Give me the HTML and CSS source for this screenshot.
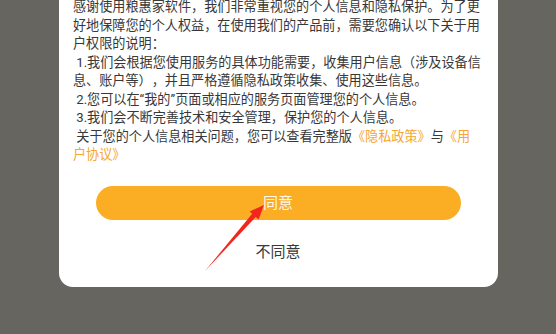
FILE: index.html
```html
<!DOCTYPE html>
<html lang="zh-CN">
<head>
<meta charset="utf-8">
<title>用户协议</title>
<link rel="stylesheet" href="styles.css">
</head>
<body>
<div class="overlay">
  <div class="dialog">
    <p class="policy">感谢使用粮惠家软件，我们非常重视您的个人信息和隐私保护。为了更<br>好地保障您的个人权益，在使用我们的产品前，需要您确认以下关于用<br>户权限的说明：<br>&nbsp;1.我们会根据您使用服务的具体功能需要，收集用户信息（涉及设备信<br>息、账户等），并且严格遵循隐私政策收集、使用这些信息。<br>&nbsp;2.您可以在“我的”页面或相应的服务页面管理您的个人信息。<br>&nbsp;3.我们会不断完善技术和安全管理，保护您的个人信息。<br>&nbsp;关于您的个人信息相关问题，您可以查看完整版<span class="link">《隐私政策》</span>与<span class="link">《用<br>户协议》</span></p>
    <div class="btn-agree">同意</div>
    <div class="btn-refuse">不同意</div>
  </div>
</div>
<svg class="arrow" width="556" height="334" viewBox="0 0 556 334">
  <polygon points="205,271 252.6,213.3 256.2,216.6" fill="#f2261c"/>
  <polygon points="264,205 249.6,211.4 258.6,219.6" fill="#f2261c"/>
</svg>
</body>
</html>
```

FILE: styles.css
```css
html, body {
  margin: 0;
  padding: 0;
}
body {
  width: 556px;
  height: 334px;
  overflow: hidden;
  background: #676560;
  position: relative;
  font-family: "Roboto", "Noto Sans CJK SC", sans-serif;
  text-spacing-trim: space-all;
}
.overlay {
  display: flex;
  justify-content: center;
}
.dialog {
  width: 439px;
  margin-top: -20px;
  background: #ffffff;
  border-radius: 14px;
  padding: 18px 14.5px 25px 14.5px;
  box-sizing: border-box;
  display: flex;
  flex-direction: column;
}
.policy {
  margin: 0;
  font-size: 13.13px;
  line-height: 18.5px;
  color: #383838;
  white-space: nowrap;
  text-spacing-trim: space-all;
}
.link {
  color: #f6a631;
}
.btn-agree {
  margin: 21px 0 0 0;
  align-self: center;
  width: 365px;
  height: 34px;
  border-radius: 17px;
  background: #fbad24;
  color: #fff8ea;
  font-size: 15px;
  line-height: 34px;
  text-align: center;
}
.btn-refuse {
  margin-top: 22px;
  font-size: 15px;
  line-height: 20px;
  color: #383838;
  text-align: center;
}
.arrow {
  position: absolute;
  left: 0;
  top: 0;
}
```
